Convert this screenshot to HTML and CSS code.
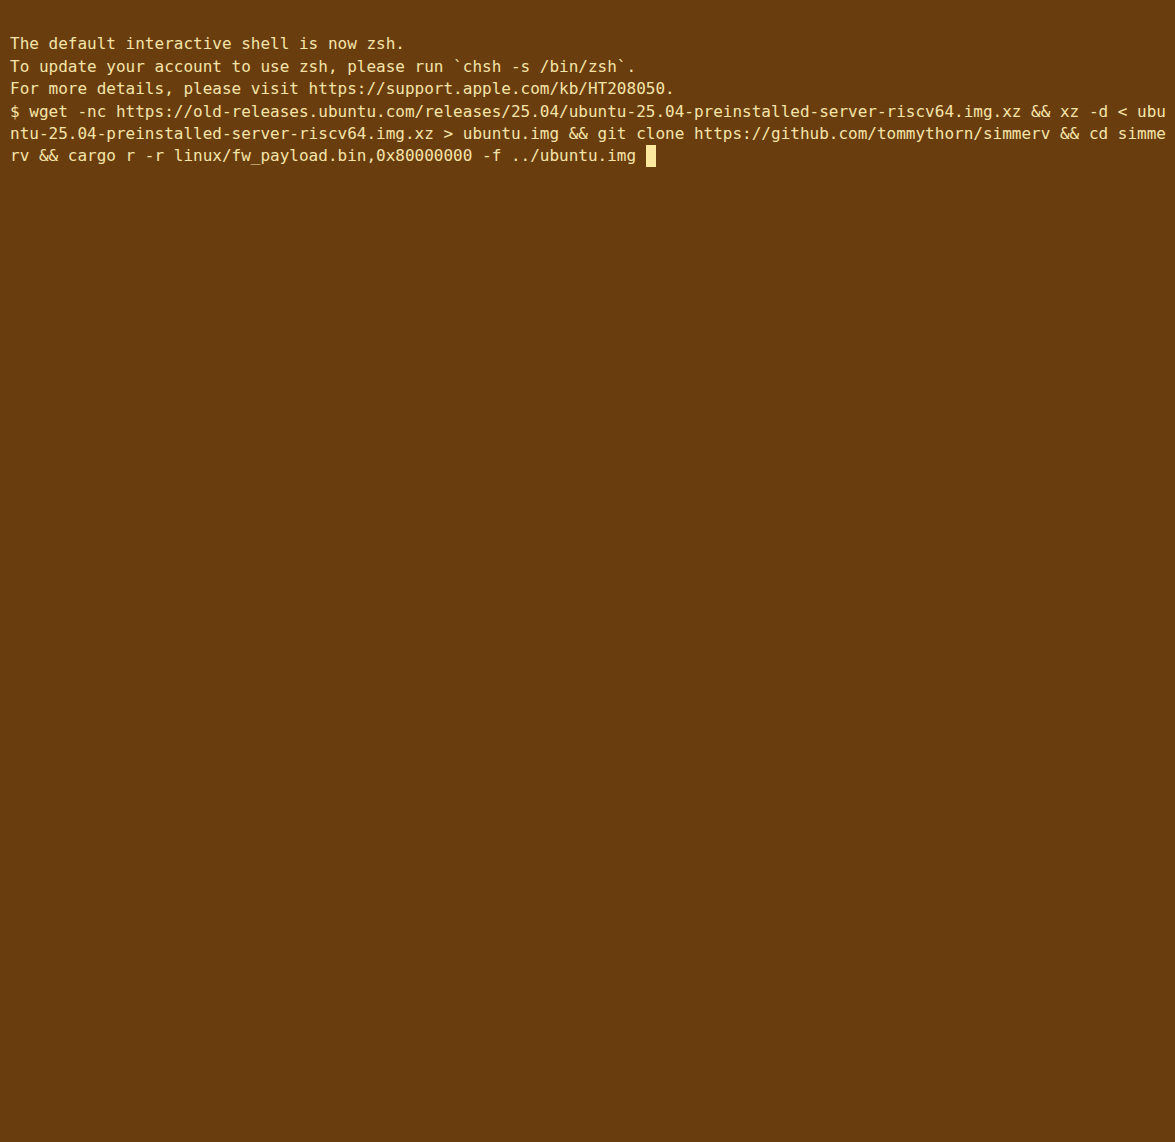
FILE: index.html
```html
<!DOCTYPE html>
<html>
<head>
<meta charset="utf-8">
<link rel="stylesheet" href="styles.css">
</head>
<body>
<div class="term">
<div class="row"> </div>
<div class="row">The default interactive shell is now zsh.</div>
<div class="row">To update your account to use zsh, please run `chsh -s /bin/zsh`.</div>
<div class="row">For more details, please visit https://support.apple.com/kb/HT208050.</div>
<div class="row">$ wget -nc https://old-releases.ubuntu.com/releases/25.04/ubuntu-25.04-preinstalled-server-riscv64.img.xz &amp;&amp; xz -d &lt; ubu</div>
<div class="row">ntu-25.04-preinstalled-server-riscv64.img.xz &gt; ubuntu.img &amp;&amp; git clone https://github.com/tommythorn/simmerv &amp;&amp; cd simme</div>
<div class="row">rv &amp;&amp; cargo r -r linux/fw_payload.bin,0x80000000 -f ../ubuntu.img <span class="cursor"> </span></div>
</div>
</body>
</html>
```

FILE: styles.css
```css
html, body {
  margin: 0;
  padding: 0;
  background: #6a3d0f;
  height: 100%;
}
.term {
  padding: 11px 10px 10px;
  font-family: "DejaVu Sans Mono", monospace;
  font-size: 16px;
  line-height: 22.4px;
  color: #f5e4a8;
}
.row {
  white-space: pre;
  height: 22.4px;
}
.cursor {
  display: inline-block;
  width: 10px;
  height: 22px;
  vertical-align: top;
  background: #fbe89c;
}
```
